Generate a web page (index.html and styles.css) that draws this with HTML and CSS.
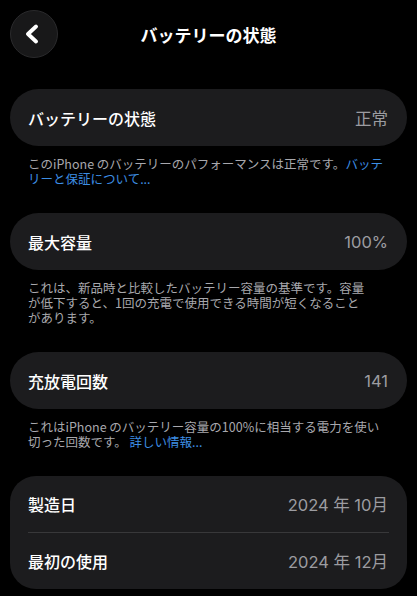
FILE: index.html
```html
<!DOCTYPE html>
<html lang="ja">
<head>
    <meta charset="UTF-8">
    <meta name="viewport" content="width=device-width, initial-scale=1.0">
    <title>バッテリーの状態</title>
    <link rel="stylesheet" href="styles.css">
</head>
<body>
<div class="header">
    <a class="back-btn" href="#">
        <svg width="20" height="20" viewBox="0 0 20 20">
            <path d="M13 2.5 L5 10 L13 17.5" fill="none" stroke="#fff" stroke-width="3.8" stroke-linecap="round" stroke-linejoin="round"/>
        </svg>
    </a>
    <h1>バッテリーの状態</h1>
    <span></span>
</div>

<div class="section">
    <div class="card">
        <div class="row"><span class="label">バッテリーの状態</span><span class="value">正常</span></div>
    </div>
    <p class="note">このiPhone のバッテリーのパフォーマンスは正常です。<a href="#">バッテ<br>リーと保証について...</a></p>
</div>

<div class="section">
    <div class="card">
        <div class="row"><span class="label">最大容量</span><span class="value">100%</span></div>
    </div>
    <p class="note">これは、新品時と比較したバッテリー容量の基準です。容量<br>が低下すると、1回の充電で使用できる時間が短くなること<br>があります。</p>
</div>

<div class="section">
    <div class="card">
        <div class="row"><span class="label">充放電回数</span><span class="value">141</span></div>
    </div>
    <p class="note">これはiPhone のバッテリー容量の100%に相当する電力を使い<br>切った回数です。 <a href="#">詳しい情報...</a></p>
</div>

<div class="section">
    <div class="card card-group">
        <div class="row"><span class="label">製造日</span><span class="value">2024 年 10月</span></div>
        <div class="row"><span class="label">最初の使用</span><span class="value">2024 年 12月</span></div>
    </div>
</div>
</body>
</html>
```

FILE: styles.css
```css
body {
    margin: 0;
    padding: 10px 10px 0;
    background: #000;
    color: #fff;
    font-family: Inter, "Noto Sans CJK JP", sans-serif;
}

.header {
    display: grid;
    grid-template-columns: 48px 1fr 48px;
    align-items: center;
    height: 48px;
    margin-bottom: 31px;
}
.back-btn {
    width: 46px;
    height: 46px;
    border-radius: 50%;
    background: #181819;
    border: 1px solid #2a2a2c;
    display: flex;
    align-items: center;
    justify-content: center;
}
.back-btn svg { margin-left: -3px; }
.header h1 {
    margin: 0;
    text-align: center;
    font-size: 17px;
    font-weight: 700;
}

.section { margin-bottom: 27px; }
.section:last-child { margin-bottom: 0; }

.card {
    background: #1c1c1e;
    border-radius: 29px;
}
.card-group { border-radius: 26px; }

.row {
    display: flex;
    justify-content: space-between;
    align-items: center;
    height: 57px;
    padding: 0 19px 0 18px;
}
.card-group .row {
    height: 56px;
    margin: 0 18px;
    padding: 0 1px 0 0;
}
.card-group .row + .row { border-top: 1px solid #38383a; }

.label {
    font-size: 16px;
    font-weight: 500;
}
.value {
    font-size: 16.5px;
    color: #9c9ca1;
}

.note {
    margin: 10px 0 0;
    padding: 0 18px;
    font-family: "Noto Sans CJK JP", sans-serif;
    font-size: 12.5px;
    line-height: 15px;
    color: #a8a8ad;
}
.note a {
    color: #3d8ee4;
    text-decoration: none;
}
```
